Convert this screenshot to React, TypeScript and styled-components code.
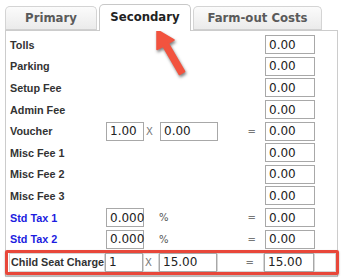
import React from 'react';
import styled, { createGlobalStyle } from 'styled-components';

const GlobalStyle = createGlobalStyle`
  html, body {
    margin: 0;
    padding: 0;
    background: #ffffff;
  }
  body {
    font-family: "DejaVu Sans Condensed", "DejaVu Sans", sans-serif;
  }
`;

const Page = styled.div`
  position: relative;
  width: 343px;
  height: 279px;
  padding: 4px 0 0 5px;
  box-sizing: border-box;
  overflow: hidden;
`;

const TabBar = styled.div`
  display: flex;
  align-items: flex-end;
  gap: 2px;
  height: 26px;
  position: relative;
  z-index: 1;
`;

const Tab = styled.div<{ $active?: boolean; $w: number }>`
  width: ${({ $w }) => $w}px;
  height: ${({ $active }) => ($active ? 27 : 24)}px;
  margin-bottom: ${({ $active }) => ($active ? -1 : 0)}px;
  box-sizing: border-box;
  display: flex;
  align-items: center;
  justify-content: center;
  padding-bottom: ${({ $active }) => ($active ? 3 : 1)}px;
  border: 1px solid ${({ $active }) => ($active ? '#c8c8c8' : '#d4d4d4')};
  border-bottom: ${({ $active }) => ($active ? 'none' : '1px solid #d0d0d0')};
  border-radius: 5px 5px 0 0;
  background: ${({ $active }) =>
    $active ? '#ffffff' : 'linear-gradient(#fbfbfb, #ebebeb)'};
  color: ${({ $active }) => ($active ? '#222222' : '#5a5a5a')};
  font-weight: bold;
  font-size: 13px;
`;

const Panel = styled.div`
  width: 333px;
  height: 247px;
  box-sizing: border-box;
  border: 1px solid #cccccc;
  padding: 3px 0 0 4px;
`;

const Row = styled.div`
  display: grid;
  grid-template-columns: 96px 38px 16px 58px 47px 50px;
  height: 21.6px;
  align-items: center;
`;

const Label = styled.div<{ $blue?: boolean }>`
  font-family: "Liberation Sans", Arial, sans-serif;
  font-weight: bold;
  font-size: 10.8px;
  color: ${({ $blue }) => ($blue ? '#1c1ce0' : '#333333')};
  white-space: nowrap;
`;

const Field = styled.div<{ $col: number }>`
  grid-column: ${({ $col }) => $col};
  height: 19px;
  box-sizing: border-box;
  border: 1px solid #a8a8a8;
  background: #ffffff;
  font-family: "DejaVu Sans", sans-serif;
  font-size: 12px;
  color: #222222;
  padding-left: 3px;
  display: flex;
  align-items: center;
`;

const Op = styled.div<{ $col: number; $right?: boolean }>`
  grid-column: ${({ $col }) => $col};
  font-family: "DejaVu Sans", sans-serif;
  font-size: 10px;
  color: #777777;
  text-align: ${({ $right }) => ($right ? 'right' : 'left')};
  padding: ${({ $right }) => ($right ? '0 9px 0 0' : '0 0 0 2px')};
`;

const Percent = styled.div`
  grid-column: 3 / span 2;
  font-family: "DejaVu Sans", sans-serif;
  font-size: 10px;
  color: #555555;
  padding-left: 15px;
`;

const Highlight = styled.div`
  margin: 0 -2px 0 -5px;
  border: 3px solid #e8473a;
  border-radius: 2px;
  padding-left: 1px;
  height: 25px;
  box-sizing: border-box;
  box-shadow: 0 1px 2px rgba(0, 0, 0, 0.35);
`;

const HighlightRow = styled.div`
  display: grid;
  grid-template-columns: 96px 38px 16px 58px 47px 50px 1fr;
  height: 19px;
  align-items: stretch;
`;

const Cell = styled.div<{ $right?: boolean }>`
  border: 1px solid #d6d6d6;
  box-sizing: border-box;
  display: flex;
  align-items: center;
  justify-content: ${({ $right }) => ($right ? 'flex-end' : 'flex-start')};
  padding: ${({ $right }) => ($right ? '0 9px 0 0' : '0 0 0 1px')};
  font-family: "DejaVu Sans", sans-serif;
  font-size: 10px;
  color: #777777;
`;

const Arrow = styled.svg`
  position: absolute;
  left: 140px;
  top: 20px;
  overflow: visible;
  filter: drop-shadow(1px 2px 1.5px rgba(0, 0, 0, 0.5));
`;

type Line = {
  label: string;
  blue?: boolean;
  kind?: 'mult' | 'pct';
  a?: string;
  b?: string;
};

const lines: Line[] = [
  { label: 'Tolls' },
  { label: 'Parking' },
  { label: 'Setup Fee' },
  { label: 'Admin Fee' },
  { label: 'Voucher', kind: 'mult', a: '1.00', b: '0.00' },
  { label: 'Misc Fee 1' },
  { label: 'Misc Fee 2' },
  { label: 'Misc Fee 3' },
  { label: 'Std Tax 1', blue: true, kind: 'pct', a: '0.000' },
  { label: 'Std Tax 2', blue: true, kind: 'pct', a: '0.000' },
];

export default function App() {
  return (
    <>
      <GlobalStyle />
      <Page>
        <TabBar>
          <Tab $w={92}>Primary</Tab>
          <Tab $w={92} $active>Secondary</Tab>
          <Tab $w={129}>Farm-out Costs</Tab>
        </TabBar>
        <Panel>
          {lines.map((l) => (
            <Row key={l.label}>
              <Label $blue={l.blue}>{l.label}</Label>
              {l.kind && <Field $col={2}>{l.a}</Field>}
              {l.kind === 'mult' && <Op $col={3}>X</Op>}
              {l.kind === 'mult' && <Field $col={4}>{l.b}</Field>}
              {l.kind === 'pct' && <Percent>%</Percent>}
              {l.kind && <Op $col={5} $right>=</Op>}
              <Field $col={6}>0.00</Field>
            </Row>
          ))}
          <Highlight>
            <HighlightRow>
              <Cell>
                <Label>Child Seat Charge</Label>
              </Cell>
              <Field $col={2}>1</Field>
              <Cell>X</Cell>
              <Field $col={4}>15.00</Field>
              <Cell $right>=</Cell>
              <Field $col={6}>15.00</Field>
              <Cell />
            </HighlightRow>
          </Highlight>
        </Panel>
        <Arrow width="60" height="65" viewBox="140 20 60 65">
          <path
            d="M157 30 L174 40 L168.3 43.3 L184.6 71.5 L179.4 74.5 L163.1 46.3 L157 49.5 Z"
            fill="#f2533f"
            stroke="#f2533f"
            strokeWidth="1.5"
            strokeLinejoin="round"
          />
        </Arrow>
      </Page>
    </>
  );
}
